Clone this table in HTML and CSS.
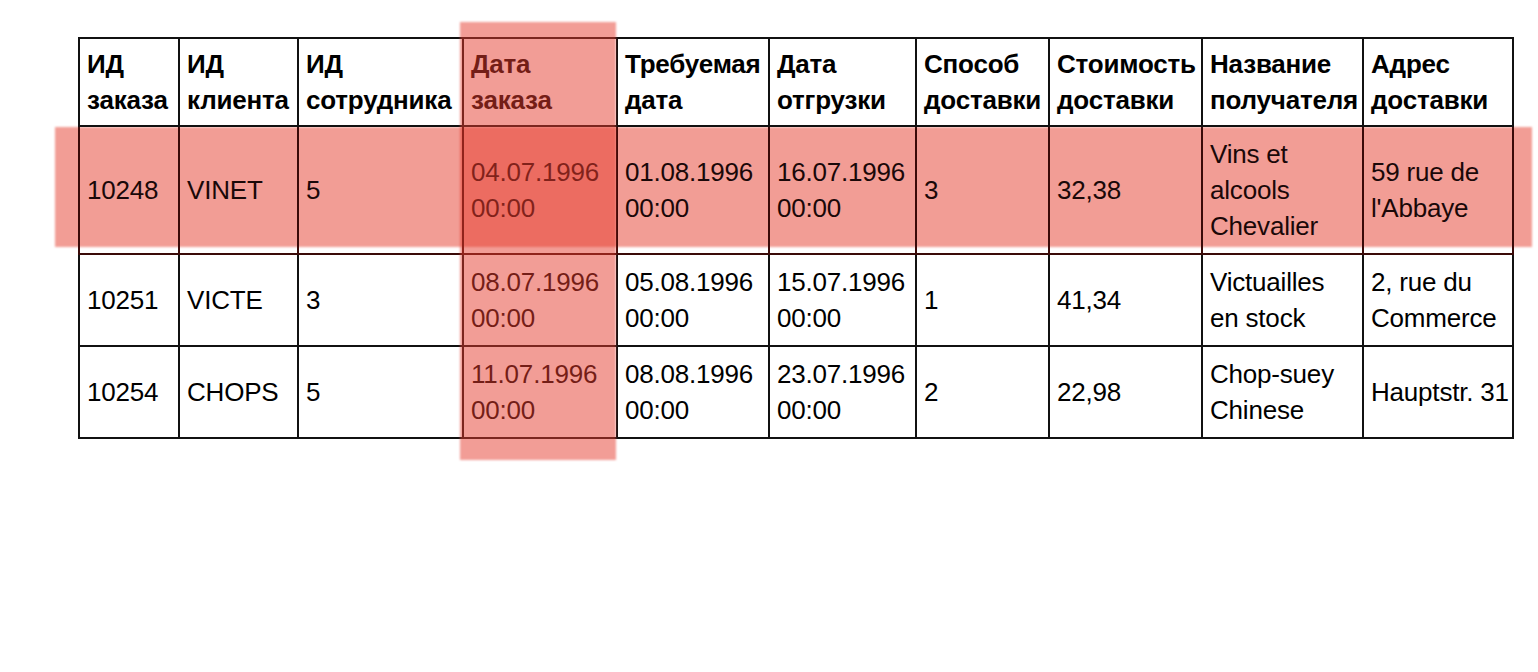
FILE: index.html
```html
<!DOCTYPE html>
<html lang="ru">
<head>
<meta charset="utf-8">
<title>Заказы</title>
<link rel="stylesheet" href="styles.css">
</head>
<body>
<div class="stage">
  <div class="hl hl-row"></div>
  <table class="orders">
    <colgroup>
      <col class="c1"><col class="c2"><col class="c3"><col class="c4"><col class="c5">
      <col class="c6"><col class="c7"><col class="c8"><col class="c9"><col class="c10">
    </colgroup>
    <thead>
      <tr>
        <th>ИД заказа</th>
        <th>ИД клиента</th>
        <th>ИД сотрудника</th>
        <th>Дата заказа</th>
        <th>Требуемая дата</th>
        <th>Дата отгрузки</th>
        <th>Способ доставки</th>
        <th>Стоимость доставки</th>
        <th>Название получателя</th>
        <th>Адрес доставки</th>
      </tr>
    </thead>
    <tbody>
      <tr class="r1">
        <td>10248</td><td>VINET</td><td>5</td>
        <td>04.07.1996 00:00</td><td>01.08.1996 00:00</td><td>16.07.1996 00:00</td>
        <td>3</td><td>32,38</td><td>Vins et alcools Chevalier</td><td>59 rue de l'Abbaye</td>
      </tr>
      <tr>
        <td>10251</td><td>VICTE</td><td>3</td>
        <td>08.07.1996 00:00</td><td>05.08.1996 00:00</td><td>15.07.1996 00:00</td>
        <td>1</td><td>41,34</td><td>Victuailles<br>en stock</td><td>2, rue du Commerce</td>
      </tr>
      <tr>
        <td>10254</td><td>CHOPS</td><td>5</td>
        <td>11.07.1996 00:00</td><td>08.08.1996 00:00</td><td>23.07.1996 00:00</td>
        <td>2</td><td>22,98</td><td>Chop-suey Chinese</td><td><span class="nowrap">Hauptstr. 31</span></td>
      </tr>
    </tbody>
  </table>
  <div class="hl hl-col"></div>
</div>
</body>
</html>
```
FILE: styles.css
```css
html, body {
  margin: 0;
  padding: 0;
  background: #ffffff;
}
body {
  font-family: "Liberation Sans", Arial, Helvetica, sans-serif;
  color: #000;
}
.stage {
  position: relative;
  width: 1538px;
  height: 672px;
  padding: 37px 0 0 78px;
  box-sizing: border-box;
}
.orders {
  position: relative;
  z-index: 1;
  border-collapse: collapse;
  table-layout: fixed;
  width: 1434px;
  font-family: "Liberation Sans", Arial, Helvetica, sans-serif;
  font-size: 26px;
  line-height: 36px;
}
.c1 { width: 100px; }
.c2 { width: 119px; }
.c3 { width: 165px; }
.c4 { width: 154px; }
.c5 { width: 152px; }
.c6 { width: 147px; }
.c7 { width: 133px; }
.c8 { width: 153px; }
.c9 { width: 161px; }
.c10 { width: 150px; }
.orders th,
.orders td {
  border: 2px solid #111;
  text-align: left;
  padding: 9px 2px 9px 7px;
  vertical-align: middle;
  white-space: normal;
}
.orders th {
  font-weight: bold;
  vertical-align: top;
  padding-top: 7px;
  padding-bottom: 7px;
  letter-spacing: -0.2px;
}
.orders td {
  letter-spacing: -0.2px;
}
.r1 td {
  color: #1a0808;
  border-color: #3a0a08;
}
.nowrap {
  white-space: nowrap;
}
.hl {
  position: absolute;
  filter: blur(1px);
  pointer-events: none;
}
.hl-col {
  z-index: 2;
  background: rgba(230, 60, 45, 0.5);
  left: 460px;
  top: 22px;
  width: 156px;
  height: 438px;
}
.hl-row {
  z-index: 0;
  background: #f29d95;
  left: 55px;
  top: 127px;
  width: 1477px;
  height: 120px;
}
```
